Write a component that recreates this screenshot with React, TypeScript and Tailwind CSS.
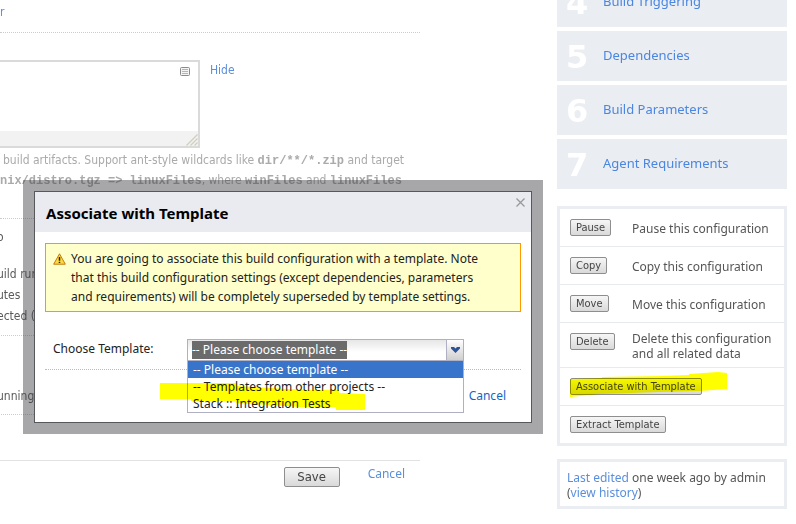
import { useEffect, useRef } from "react";
import type { ReactNode } from "react";

const STEPS = [
  { num: 4, label: "Build Triggering" },
  { num: 5, label: "Dependencies" },
  { num: 6, label: "Build Parameters" },
  { num: 7, label: "Agent Requirements" },
];

const ACTIONS = [
  { button: "Pause", text: "Pause this configuration" },
  { button: "Copy", text: "Copy this configuration" },
  { button: "Move", text: "Move this configuration" },
  { button: "Delete", text: "Delete this configuration and all related data" },
  { button: "Associate with Template", marked: true },
  { button: "Extract Template" },
];

const TEMPLATES = ["-- Please choose template --", "-- Templates from other projects --", "Stack :: Integration Tests"];

function SmallButton({ children }: { children: ReactNode }) {
  return (
    <button
      type="button"
      className="h-[17px] px-[5px] rounded-[2px] border border-[#8e8e8e] bg-linear-to-b from-[#f6f6f6] to-[#d9d9d9] font-['DejaVu_Sans_Condensed','DejaVu_Sans',sans-serif] text-[11px] leading-[15px] text-[#444] whitespace-nowrap"
    >
      {children}
    </button>
  );
}

function Code({ children }: { children: ReactNode }) {
  return <code className="font-['Liberation_Mono',monospace] text-[12px] leading-none font-bold">{children}</code>;
}

function Settings() {
  return (
    <main className="flex-1 min-w-0 font-['DejaVu_Sans_Condensed','DejaVu_Sans',sans-serif] text-[#5a5a5a]">
      <div className="pt-0.5 pb-2.5 leading-5 border-b border-dotted border-[#ccc]">
        <a href="#" className="text-[#5a8fdc]">r</a>
      </div>

      {/* Artifact paths */}
      <section className="pt-[27px] pb-7 border-b border-dotted border-[#ccc]">
        <div className="flex items-start gap-2.5">
          <div className="relative w-[200px] border-2 border-l-0 border-[#dadada]">
            <textarea aria-label="Artifact paths" className="block w-full h-[69px] resize-none outline-none bg-white" />
            <div className="h-[15px] bg-[#f2f2f2] flex justify-end items-end">
              <svg width="12" height="12" viewBox="0 0 12 12" stroke="#cfcfc0" strokeWidth="1.3">
                <path d="M0.5 11.5 11.5 .5M4.5 11.5l7-7M8.5 11.5l3-3" />
              </svg>
            </div>
            <svg className="absolute top-[5px] right-2" width="10" height="9" viewBox="0 0 10 9" fill="none">
              <rect x=".5" y=".5" width="9" height="8" rx="1" fill="#f4f4f4" stroke="#8b8b8b" />
              <path d="M2 2.5h6M2 4.5h6M2 6.5h6" stroke="#b5b5b5" />
            </svg>
          </div>
          <a href="#" className="leading-5 text-[#5a8fdc]">Hide</a>
        </div>
        <p className="pt-0.5 leading-5 text-[#aaa] whitespace-nowrap">
          <span className="block pl-[3px]">build artifacts. Support ant-style wildcards like <Code>dir/**/*.zip</Code> and target</span>
          <span className="block"><Code>nix/distro.tgz =&gt; linuxFiles</Code>, where <Code>winFiles</Code> and <Code>linuxFiles</Code></span>
        </p>
      </section>

      <section className="-ml-[3px] py-2 leading-[21px] border-b border-dotted border-[#ccc]">
        <p className="mb-4">o</p>
        <p>uild run</p>
        <p>utes</p>
        <p>ected (</p>
      </section>

      <section className="-ml-[3px] pt-[50px] pb-2 leading-5 border-b border-dotted border-[#ccc]">
        <p>unning</p>
      </section>

      <div className="mt-[45px] pt-1.5 pr-[15px] flex justify-end items-start gap-7 border-t border-[#e2e2e2]">
        <button
          type="button"
          className="w-14 h-5 rounded-[2px] border border-[#8e8e8e] bg-linear-to-b from-[#f6f6f6] to-[#d9d9d9] text-[13px] leading-[18px] text-[#444]"
        >
          Save
        </button>
        <a href="#" className="font-['Noto_Sans',sans-serif] leading-[14px] text-[#5a8fdc]">Cancel</a>
      </div>
    </main>
  );
}

function Sidebar() {
  return (
    <aside className="w-[230px] shrink-0 text-[#555]">
      <nav className="-mt-[23px] flex flex-col gap-1">
        {STEPS.map((step) => (
          <a key={step.num} href="#" className="h-[50px] pl-[9px] flex items-center bg-[#eaedf2] text-[13px] text-[#4b86e0]">
            <span className="w-[37px] pt-0.5 font-['DejaVu_Sans',sans-serif] text-[32px] font-bold leading-8 text-white">{step.num}</span>
            {step.label}
          </a>
        ))}
      </nav>

      <ul className="mt-[17px] border-3 border-[#eaedf2] divide-y divide-[#e8eaec] leading-[15px]">
        {ACTIONS.map((action) => (
          <li key={action.button} className="min-h-[38px] last:min-h-[37px] px-2.5 pt-2 pb-1.5 flex items-center">
            <div className="relative w-[62px] mt-0.5 self-start shrink-0 flex">
              <SmallButton>{action.button}</SmallButton>
              {action.marked && (
                <svg className="absolute -top-1.5 left-0 mix-blend-multiply pointer-events-none" width="158" height="26" viewBox="0 0 158 26">
                  <path d="M0 7 32 6V5L93 4l26-1V2l29-2 9 1v16l-27 2-40 1-60 2-30 3Z" fill="#ff0" />
                </svg>
              )}
            </div>
            {action.text && <p>{action.text}</p>}
          </li>
        ))}
      </ul>

      <p className="mt-[13px] border-3 border-[#eaedf2] px-[7px] pt-2 pb-1.5 leading-[15px] whitespace-nowrap">
        <a href="#" className="text-[#5a8fdc]">Last edited</a> one week ago by admin
        <br />(<a href="#" className="text-[#5a8fdc]">view history</a>)
      </p>
    </aside>
  );
}

function TemplatePicker() {
  const ref = useRef<HTMLInputElement>(null);

  useEffect(() => {
    ref.current?.focus();
    ref.current?.select();
  }, []);

  return (
    <div className="relative w-[277px]">
      <div className="h-[22px] flex border border-[#b0b0c4]">
        <input
          id="template"
          ref={ref}
          role="combobox"
          aria-expanded="true"
          aria-controls="template-list"
          defaultValue={TEMPLATES[0]}
          className="flex-1 min-w-0 px-1 outline-none bg-linear-to-b from-[#e6e6e6] to-white to-60% text-[#222] selection:bg-[#6b6b6b] selection:text-white"
        />
        <button type="button" aria-label="Show templates" className="w-[17px] flex items-center justify-center border-l border-[#b0b0c4] bg-linear-to-b from-white to-[#cfcfcf]">
          <svg width="9" height="6" viewBox="0 0 9 6" fill="#2f5597">
            <path d="M0 0h3l1.500 1.500L6 0h3v1.500L4.500 6 0 1.500Z" />
          </svg>
        </button>
      </div>
      <ul id="template-list" role="listbox" className="absolute z-10 top-[21px] inset-x-0 border border-[#b0b0c4] bg-white leading-[17px] text-[#222]">
        {TEMPLATES.map((name, i) => (
          <li key={name} role="option" aria-selected={i === 0} className="px-[5px] aria-selected:bg-[#3874c9] aria-selected:text-white">
            {name}
          </li>
        ))}
      </ul>
      {/* Marker stroke over the list */}
      <svg className="absolute z-20 top-11 -left-[27px] mix-blend-multiply pointer-events-none" width="206" height="28" viewBox="0 0 206 28">
        <path d="M0 0H77V3l50 3 20 1h32v3l26 1v16h-29v-3h-36l-30-2-34-2v-2H31v-2H0Z" fill="#ff0" />
      </svg>
    </div>
  );
}

function TemplateDialog() {
  return (
    <div className="absolute top-[180px] left-[23px] w-[520px] p-[11px] bg-[#3c3c40]/45">
      <div role="dialog" aria-labelledby="dialog-title" className="border border-[#57585c] bg-white text-[#222]">
        <header className="h-10 pl-[11px] pr-1.5 flex justify-between bg-[#eaebf0]">
          <h2 id="dialog-title" className="pt-px text-[15px] leading-10 font-bold text-black">Associate with Template</h2>
          <button type="button" aria-label="Close" className="h-5 flex items-center">
            <svg width="9" height="9" viewBox="0 0 9 9" stroke="#999" strokeWidth="1.300">
              <path d="M.5 .5l8 8M8.500 .5l-8 8" />
            </svg>
          </button>
        </header>

        <div className="px-2.5 pt-[11px]">
          <div className="pl-[7px] pr-8 py-[5px] flex items-start gap-[5px] border border-[#f90] bg-[#ffc] leading-[19px]">
            <svg className="mt-1 shrink-0" width="13" height="12" viewBox="0 0 13 12">
              <path d="M6.500 .8 12.300 11.200H.7Z" fill="#ffd93b" stroke="#c07a10" strokeLinejoin="round" />
              <path d="M6.500 4v3.800M6.500 8.700v1.400" stroke="#222" strokeWidth="1.500" />
            </svg>
            <p>
              You are going to associate this build configuration with a template. Note that this build configuration
              settings (except dependencies, parameters and requirements) will be completely superseded by template settings.
            </p>
          </div>

          <div className="mt-[27px] pb-2 pl-2 flex items-start border-b border-dotted border-[#bbb]">
            <label htmlFor="template" className="w-[134px] leading-5">Choose Template:</label>
            <TemplatePicker />
          </div>
          <div className="pt-4 pb-4 pr-[15px] flex justify-end">
            <a href="#" className="leading-5 text-[#1565c8]">Cancel</a>
          </div>
        </div>
      </div>
    </div>
  );
}

export default function App() {
  return (
    <div className="relative min-h-screen overflow-hidden bg-white font-['Noto_Sans',sans-serif] text-[12px]">
      <div className="flex gap-[137px] pr-[9px]">
        <Settings />
        <Sidebar />
      </div>
      <TemplateDialog />
    </div>
  );
}
